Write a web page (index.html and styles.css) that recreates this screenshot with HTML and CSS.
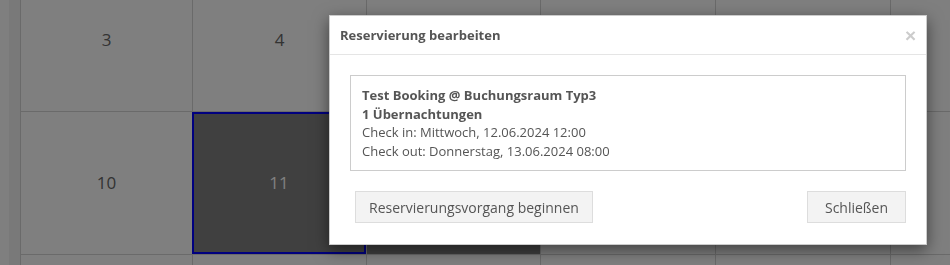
FILE: index.html
```html
<!DOCTYPE html>
<html lang="de">

<head>
    <meta charset="UTF-8">
    <meta name="viewport" content="width=device-width, initial-scale=1.0">
    <title>Kalender</title>
    <link rel="stylesheet" href="styles.css">
</head>

<body>

    <div class="calendar">
        <div class="week">
            <div class="day">3</div>
            <div class="day">4</div>
            <div class="day">5</div>
            <div class="day">6</div>
            <div class="day">7</div>
            <div class="day"></div>
        </div>
        <div class="week">
            <div class="day">10</div>
            <div class="day selected">11</div>
            <div class="day booked">12</div>
            <div class="day">13</div>
            <div class="day">14</div>
            <div class="day"></div>
        </div>
        <div class="week week-partial">
            <div class="day"></div>
            <div class="day"></div>
            <div class="day"></div>
            <div class="day"></div>
            <div class="day"></div>
            <div class="day"></div>
        </div>
    </div>

    <div class="modal-backdrop"></div>

    <div class="modal">
        <div class="modal-header">
            <h4 class="modal-title">Reservierung bearbeiten</h4>
            <button type="button" class="close">&times;</button>
        </div>
        <div class="modal-body">
            <div class="booking-info">
                <strong>Test Booking @ Buchungsraum Typ3</strong><br>
                <strong>1 Übernachtungen</strong><br>
                Check in: Mittwoch, 12.06.2024 12:00<br>
                Check out: Donnerstag, 13.06.2024 08:00
            </div>
        </div>
        <div class="modal-footer">
            <button type="button" class="btn">Reservierungsvorgang beginnen</button>
            <button type="button" class="btn btn-close">Schließen</button>
        </div>
    </div>

</body>

</html>
```

FILE: styles.css
```css
body {
    font-family: "Open Sans", Arial, sans-serif;
    font-size: 13px;
    line-height: 1.42857;
    color: #555;
    background-color: #fff;
    margin: 0;
    padding: 0;
    height: 265px;
    overflow: hidden;
}

.calendar {
    margin-left: 9px;
    margin-top: -31px;
    padding-left: 11px;
    background-color: #f2f2f2;
}

.week {
    display: grid;
    grid-template-columns: 172px 174px 174px 175px 175px 60px;
    border-bottom: 1px solid #d4d4d4;
}

.week-partial .day {
    height: 20px;
}

.day {
    height: 142px;
    display: flex;
    align-items: center;
    justify-content: center;
    font-size: 17px;
    color: #666;
    background-color: #fff;
    border-left: 1px solid #d4d4d4;
    box-sizing: border-box;
}

.day.selected {
    background-color: #808080;
    color: #fff;
    border: 2px solid #0000ff;
}

.day.booked {
    background-color: #808080;
    color: #fff;
}

.modal-backdrop {
    position: fixed;
    top: 0;
    left: 0;
    right: 0;
    bottom: 0;
    background-color: rgba(0, 0, 0, 0.5);
}

.modal {
    position: absolute;
    top: 15px;
    left: 329px;
    width: 598px;
    box-sizing: border-box;
    background-color: #fff;
    border: 1px solid rgba(0, 0, 0, 0.2);
    box-shadow: 0 5px 15px rgba(0, 0, 0, 0.5);
}

.modal-header {
    display: flex;
    justify-content: space-between;
    align-items: center;
    height: 38px;
    padding: 0 10px;
    border-bottom: 1px solid #e5e5e5;
}

.modal-title {
    margin: 0;
    font-size: 13px;
    font-weight: bold;
    color: #555;
}

.close {
    background: none;
    border: none;
    padding: 0;
    font-family: Arial, sans-serif;
    font-size: 19px;
    font-weight: bold;
    line-height: 1;
    color: #ccc;
    cursor: pointer;
}

.modal-body {
    padding: 20px 20px 0;
}

.booking-info {
    border: 1px solid #ccc;
    padding: 10px 11px;
}

.modal-footer {
    display: flex;
    justify-content: space-between;
    padding: 20px 20px 21px 25px;
}

.btn {
    font-family: "Open Sans", Arial, sans-serif;
    font-size: 14px;
    color: #555;
    height: 32px;
    padding: 0 13px;
    background-color: #f3f3f3;
    border: 1px solid #ddd;
    border-radius: 0;
    cursor: pointer;
}

.btn-close {
    width: 99px;
}

.btn:hover {
    background-color: #e8e8e8;
}
```
